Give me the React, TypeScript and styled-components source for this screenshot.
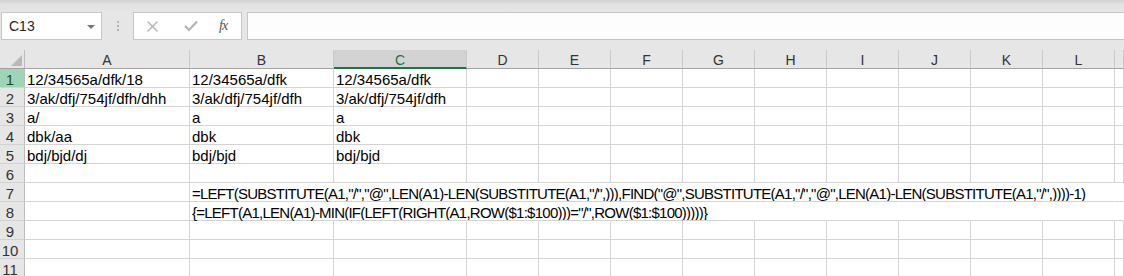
import React from 'react';
import styled, { createGlobalStyle, css } from 'styled-components';

const GlobalStyle = createGlobalStyle`
  html, body {
    margin: 0;
    padding: 0;
    background: #ffffff;
    overflow: hidden;
  }
  body {
    font-family: "Liberation Sans", Arial, sans-serif;
  }
`;

const Page = styled.div`
  width: 1124px;
  height: 276px;
  overflow: hidden;
  background: #ffffff;
`;

const FormulaArea = styled.div`
  height: 50px;
  box-sizing: border-box;
  padding-top: 12px;
  background: linear-gradient(#d3d3d3 0px, #e2e2e2 5px, #e6e6e6 12px);
`;

const Bar = styled.div`
  display: flex;
  align-items: stretch;
  height: 28px;
`;

const NameBox = styled.div`
  box-sizing: border-box;
  width: 101px;
  margin-left: 1px;
  display: flex;
  align-items: center;
  justify-content: space-between;
  padding: 0 6px 0 7px;
  background: #ffffff;
  border: 1px solid #c6c6c6;
  font-size: 14px;
  color: #262626;
`;

const Caret = styled.span`
  width: 0;
  height: 0;
  border-left: 4px solid transparent;
  border-right: 4px solid transparent;
  border-top: 4px solid #7a7a7a;
  margin-top: 1px;
`;

const Grip = styled.div`
  width: 31px;
  display: flex;
  flex-direction: column;
  align-items: center;
  justify-content: center;
  gap: 2px;
`;

const Dot = styled.span`
  width: 2px;
  height: 2px;
  background: #b4b4b4;
`;

const ActionBox = styled.div`
  box-sizing: border-box;
  width: 109px;
  display: flex;
  align-items: center;
  background: #ffffff;
  border: 1px solid #c6c6c6;
  padding-left: 12px;
`;

const ActionIcon = styled.span<{ $w: number }>`
  width: ${(p) => p.$w}px;
  display: flex;
  align-items: center;
`;

const Fx = styled.span`
  font-family: "Liberation Serif", "Times New Roman", serif;
  font-style: italic;
  font-size: 14px;
  color: #555555;
  letter-spacing: -1px;
  margin-left: 3px;
`;

const FormulaInput = styled.div`
  flex: 1;
  margin-left: 5px;
  margin-right: -2px;
  background: #fdfdfd;
  border: 1px solid #c6c6c6;
`;

const Sheet = styled.div`
  display: grid;
  grid-template-columns: 25px 165px 144px 133px repeat(9, 72px) 1fr;
  grid-auto-rows: 19px;
  font-size: 15px;
  color: #000000;
`;

const Corner = styled.div`
  box-sizing: border-box;
  background: #e6e6e6;
  border-right: 1px solid #bcbcbc;
  border-bottom: 1px solid #a3a3a3;
  position: relative;
  svg {
    position: absolute;
    left: 0;
    top: 0;
  }
`;

const ColHeader = styled.div<{ $selected?: boolean }>`
  box-sizing: border-box;
  display: flex;
  align-items: center;
  justify-content: center;
  background: #e6e6e6;
  border-right: 1px solid #c9c9c9;
  border-bottom: 1px solid #a3a3a3;
  font-size: 14px;
  color: #333333;
  padding-top: 1px;
  ${(p) =>
    p.$selected &&
    css`
      background: #d3d3d3;
      color: #217346;
      border-bottom: 2px solid #217346;
      padding-top: 2px;
    `}
`;

const RowHeader = styled.div<{ $selected?: boolean }>`
  box-sizing: border-box;
  display: flex;
  align-items: flex-end;
  justify-content: center;
  padding-right: 4px;
  line-height: 15px;
  background: ${(p) => (p.$selected ? '#9fd5b7' : '#e6e6e6')};
  color: ${(p) => (p.$selected ? '#1c4a30' : '#333333')};
  border-right: 1px solid #bcbcbc;
  border-bottom: 1px solid #d2d2d2;
`;

const Cell = styled.div<{ $flow?: boolean; $formula?: boolean }>`
  box-sizing: border-box;
  display: flex;
  align-items: flex-end;
  padding-left: 2px;
  line-height: 15px;
  white-space: nowrap;
  border-right: 1px solid ${(p) => (p.$flow ? 'transparent' : '#d4d4d4')};
  border-bottom: 1px solid #d4d4d4;
  min-width: 0;
  letter-spacing: ${(p) => (p.$formula ? '-0.75px' : 'normal')};
`;

const columns = ['A', 'B', 'C', 'D', 'E', 'F', 'G', 'H', 'I', 'J', 'K', 'L', ''];

const rows: Record<number, string[]> = {
  1: ['12/34565a/dfk/18', '12/34565a/dfk', '12/34565a/dfk'],
  2: ['3/ak/dfj/754jf/dfh/dhh', '3/ak/dfj/754jf/dfh', '3/ak/dfj/754jf/dfh'],
  3: ['a/', 'a', 'a'],
  4: ['dbk/aa', 'dbk', 'dbk'],
  5: ['bdj/bjd/dj', 'bdj/bjd', 'bdj/bjd'],
  7: [
    '',
    '=LEFT(SUBSTITUTE(A1,"/","@",LEN(A1)-LEN(SUBSTITUTE(A1,"/",))),FIND("@",SUBSTITUTE(A1,"/","@",LEN(A1)-LEN(SUBSTITUTE(A1,"/",))))-1)',
  ],
  8: ['', '{=LEFT(A1,LEN(A1)-MIN(IF(LEFT(RIGHT(A1,ROW($1:$100)))="/",ROW($1:$100)))))}'],
};

const rowNumbers = [1, 2, 3, 4, 5, 6, 7, 8, 9, 10, 11];

const App: React.FC = () => {
  return (
    <Page>
      <GlobalStyle />
      <FormulaArea>
        <Bar>
          <NameBox>
            C13
            <Caret />
          </NameBox>
          <Grip>
            <Dot />
            <Dot />
            <Dot />
          </Grip>
          <ActionBox>
            <ActionIcon $w={38}>
              <svg width="13" height="13" viewBox="0 0 13 13">
                <path d="M1.5 1.5 L11.5 11.5 M11.5 1.5 L1.5 11.5" stroke="#b3b3b3" strokeWidth="1.4" fill="none" />
              </svg>
            </ActionIcon>
            <ActionIcon $w={32}>
              <svg width="14" height="12" viewBox="0 0 14 12">
                <path d="M1 6 L5 10 L13 1.5" stroke="#b3b3b3" strokeWidth="2.2" fill="none" />
              </svg>
            </ActionIcon>
            <Fx>fx</Fx>
          </ActionBox>
          <FormulaInput />
        </Bar>
      </FormulaArea>
      <Sheet>
        <Corner>
          <svg width="24" height="19" viewBox="0 0 24 19">
            <polygon points="22,5 22,16 11,16" fill="#b8b8b8" />
          </svg>
        </Corner>
        {columns.map((c, i) => (
          <ColHeader key={c || 'm'} $selected={i === 2}>
            {c}
          </ColHeader>
        ))}
        {rowNumbers.map((r) => {
          const values = rows[r] || [];
          const overflow = r === 7 || r === 8;
          return (
            <React.Fragment key={r}>
              <RowHeader $selected={r === 1}>{r}</RowHeader>
              {columns.map((c, i) => (
                <Cell key={c || 'm'} $flow={overflow && i >= 1} $formula={overflow && i === 1}>
                  {values[i] || ''}
                </Cell>
              ))}
            </React.Fragment>
          );
        })}
      </Sheet>
    </Page>
  );
};

export default App;
